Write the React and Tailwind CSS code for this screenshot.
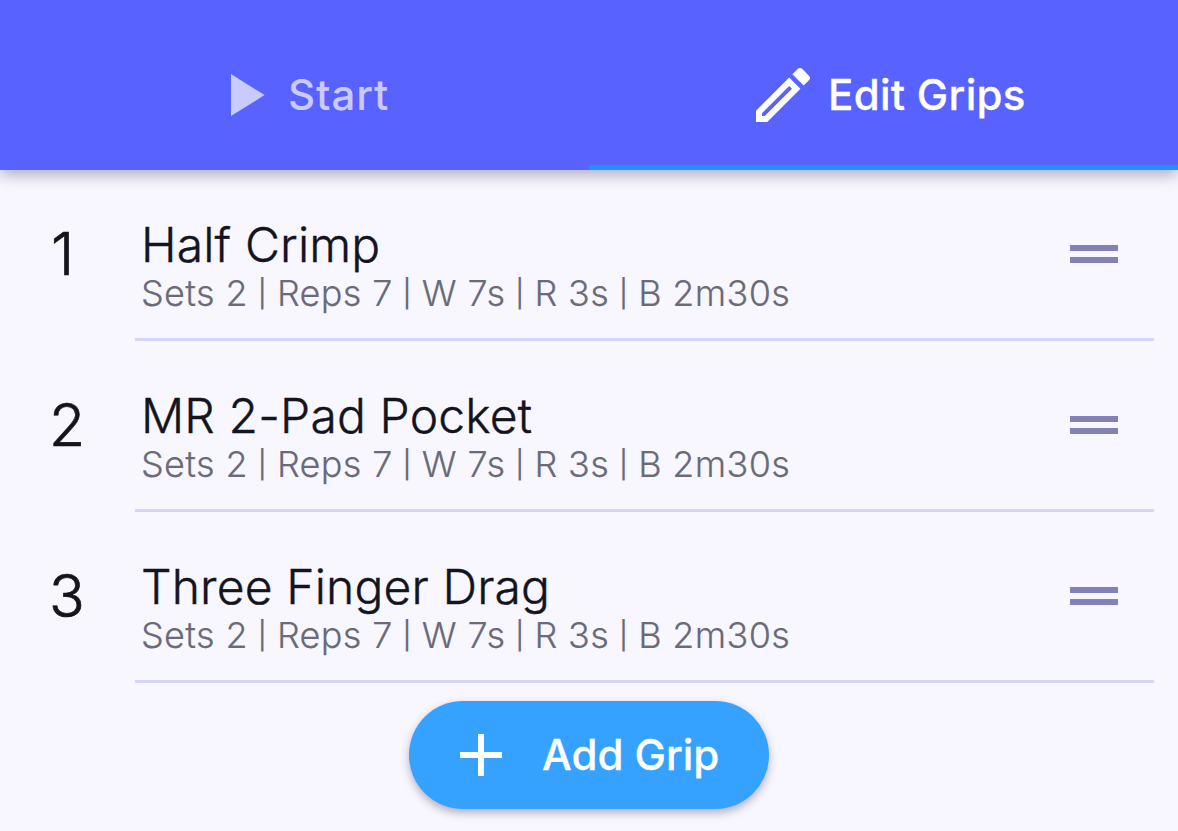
const detail = ["Sets 2", "Reps 7", "W 7s", "R 3s", "B 2m30s"];

const grips = [
  { name: "Half Crimp", detail },
  { name: "MR 2-Pad Pocket", detail },
  { name: "Three Finger Drag", detail },
];

function Icon({ d, className = "" }) {
  return (
    <svg viewBox="0 0 24 24" className={`size-[72px] shrink-0 fill-current ${className}`}>
      <path d={d} />
    </svg>
  );
}

const PLAY = "M8 5v14l11.2-7z";
const EDIT =
  "M14.06 9.02l.92.92L5.92 19H5v-.92l9.06-9.06M17.66 3c-.25 0-.51.1-.7.29l-1.83 1.83 3.75 3.75 1.83-1.83c.39-.39.39-1.02 0-1.41l-2.34-2.34c-.2-.2-.45-.29-.71-.29zm-3.6 3.19L3 17.25V21h3.75L17.81 9.94l-3.75-3.75z";
const ADD = "M19 13h-6v6h-2v-6H5v-2h6V5h2v6h6v2z";
const HANDLE = "M20 9H4v2h16V9zM4 15h16v-2H4v2z";

function Detail({ parts }) {
  return (
    <div className="flex text-[36px] font-light leading-[38px] tracking-[0.35px] text-[#6a6a78] [-webkit-text-stroke:0.2px]">
      {parts.map((part, i) => (
        <span key={part} className="flex">
          {i > 0 && <span className="w-[29px] pt-[1px] text-center text-[27px] font-normal">|</span>}
          <span>{part}</span>
        </span>
      ))}
    </div>
  );
}

function Row({ index, grip }) {
  return (
    <li className="flex h-[171px] pr-6">
      <div className={`w-[135px] shrink-0 pt-[45px] text-[59px] font-light leading-[78px] text-[#14141e] [-webkit-text-stroke:0.7px] ${index === 1 ? "pl-[51px]" : "pl-[49px]"}`}>
        {index}
      </div>
      <div className="flex grow justify-between border-b-3 border-[#d5d5f8] pl-[6px] pr-6">
        <div className="whitespace-nowrap pt-[45px]">
          <div className="text-[48px] font-light leading-[59px] tracking-[0.15px] text-[#14141e] [-webkit-text-stroke:0.4px]">{grip.name}</div>
          <Detail parts={grip.detail} />
        </div>
        <Icon d={HANDLE} className="mt-[48px] text-[#8382b8]" />
      </div>
    </li>
  );
}

export default function App() {
  return (
    <div className="flex h-[831px] w-[1178px] flex-col overflow-hidden bg-[#f8f7ff] font-['Inter','Liberation_Sans',sans-serif]">
      <header className="z-10 flex h-[170px] shrink-0 bg-[#5862ff] text-[42px] font-medium leading-[54px] text-white shadow-[0_5px_14px_rgba(40,40,90,0.36)]">
        <button className="flex w-1/2 items-start pl-[207px] pt-[59px] text-[#c9cbff]">
          <Icon d={PLAY} />
          <span className="pl-[9px] pt-[9px] tracking-[0.9px]">Start</span>
        </button>
        <button className="flex w-1/2 items-start border-b-5 border-[#1b94ff] pl-[158px] pt-[59px]">
          <Icon d={EDIT} />
          <span className="whitespace-nowrap pl-[9px] pt-[9px] tracking-[0.3px] [-webkit-text-stroke:0.3px]">Edit Grips</span>
        </button>
      </header>
      <ul className="flex flex-col">
        {grips.map((grip, i) => (
          <Row key={grip.name} index={i + 1} grip={grip} />
        ))}
      </ul>
      <button className="mt-[18px] flex h-[108px] w-[360px] shrink-0 items-center self-center rounded-full bg-[#35a2ff] pl-9 text-[42px] font-medium leading-[54px] text-white shadow-[0_4px_8px_rgba(50,50,90,0.36)]">
        <Icon d={ADD} />
        <span className="whitespace-nowrap pl-[25px] [-webkit-text-stroke:0.3px]">Add Grip</span>
      </button>
    </div>
  );
}
